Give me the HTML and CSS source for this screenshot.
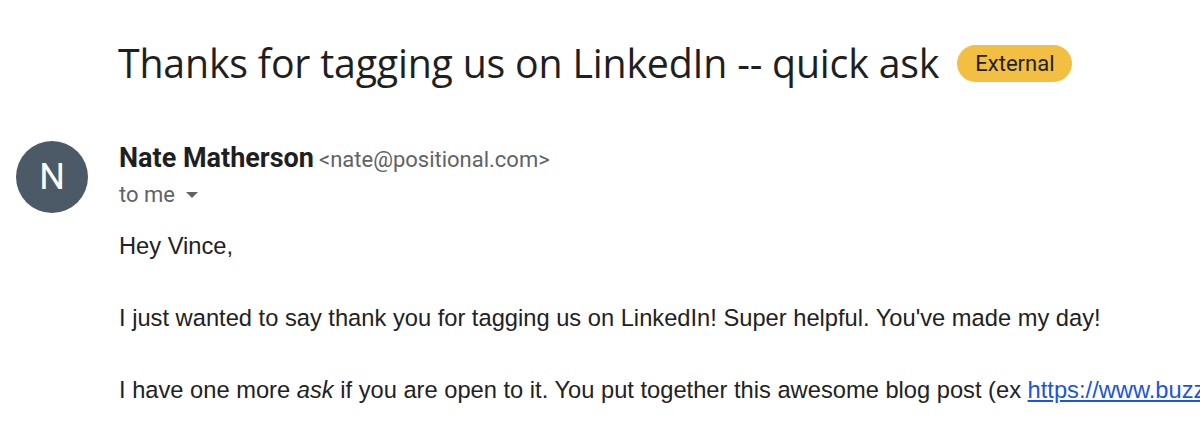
FILE: index.html
```html
<!DOCTYPE html>
<html lang="en">
<head>
<meta charset="utf-8">
<title>Thanks for tagging us on LinkedIn -- quick ask</title>
<link rel="stylesheet" href="styles.css">
</head>
<body>
<div class="mail">
  <div class="subject-row">
    <h1 class="subject">Thanks for tagging us on LinkedIn -- quick ask</h1>
    <span class="badge">External</span>
  </div>
  <div class="message">
    <div class="avatar">N</div>
    <div class="content">
      <div class="sender">
        <span class="name">Nate Matherson</span>
        <span class="email">&lt;nate@positional.com&gt;</span>
      </div>
      <div class="recipient">
        <span>to me</span>
        <svg class="caret" viewBox="0 0 10 5" width="12" height="6"><path d="M0 0h10L5 5z" fill="#5f6368"/></svg>
      </div>
      <div class="body">
        <p>Hey Vince,</p>
        <p>I just wanted to say thank you for tagging us on LinkedIn! Super helpful. You've made my day!</p>
        <p>I have one more <em>ask</em> if you are open to it. You put together this awesome blog post (ex <a href="#">https://www.buzzsprout.com/blog/best-podcast-hosting</a>)</p>
      </div>
    </div>
  </div>
</div>
</body>
</html>
```
FILE: styles.css
```css
html, body {
  margin: 0;
  padding: 0;
  background: #ffffff;
  overflow: hidden;
}
.mail {
  width: 1200px;
  height: 433px;
  overflow: hidden;
}
.subject-row {
  display: flex;
  align-items: center;
  padding: 37px 0 0 118px;
  height: 52px;
  white-space: nowrap;
}
.subject {
  margin: 0;
  font-family: "Open Sans", sans-serif;
  font-weight: 400;
  font-size: 39.3px;
  color: #1f1f1f;
  letter-spacing: -0.2px;
}
.badge {
  margin-left: 18px;
  background: #f2bf42;
  color: #222;
  font-family: "Roboto", sans-serif;
  font-size: 22px;
  padding: 0 18px;
  height: 37px;
  line-height: 37px;
  border-radius: 19px;
}
.message {
  display: flex;
  padding: 52px 0 0 16px;
}
.avatar {
  width: 72px;
  height: 72px;
  flex: none;
  border-radius: 50%;
  background: #4b5a66;
  color: #fff;
  font-family: "Roboto", sans-serif;
  font-size: 36px;
  display: flex;
  align-items: center;
  justify-content: center;
}
.content {
  margin-left: 31px;
  white-space: nowrap;
}
.sender {
  font-family: "Roboto", sans-serif;
  height: 34px;
  line-height: 34px;
}
.name {
  font-weight: 700;
  font-size: 27px;
  color: #1f1f1f;
}
.email {
  font-size: 22px;
  color: #5f6368;
  margin-left: 1px;
}
.recipient {
  font-family: "Roboto", sans-serif;
  font-size: 22px;
  color: #5f6368;
  height: 40px;
  line-height: 40px;
  display: flex;
  align-items: center;
  gap: 11px;
}
.body {
  font-family: "Liberation Sans", Arial, sans-serif;
  font-size: 23.7px;
  color: #222;
  line-height: 36px;
  padding-top: 13px;
}
.body p {
  margin: 0 0 36px 0;
}
.body a {
  color: #1a56db;
  text-decoration: underline;
}
```
